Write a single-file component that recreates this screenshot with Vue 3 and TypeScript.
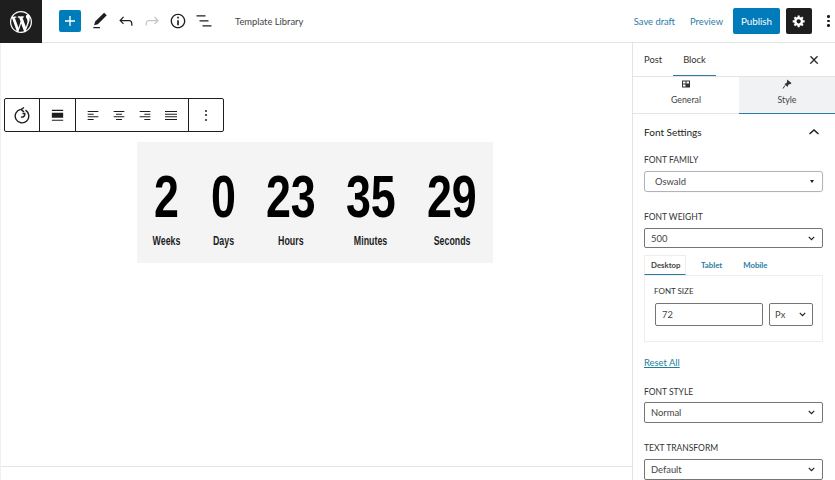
<script setup lang="ts">
const counters = [
  { value: '2', label: 'Weeks', width: 29 },
  { value: '0', label: 'Days', width: 25 },
  { value: '23', label: 'Hours', width: 50 },
  { value: '35', label: 'Minutes', width: 50 },
  { value: '29', label: 'Seconds', width: 52 },
];

const headerIcons = [
  { name: 'edit', d: 'M20.1 5.1L16.9 2 6.2 12.7l-1.3 4.4 4.5-1.3L20.1 5.1zM4 20.8h8v-1.5H4v1.5z' },
  { name: 'undo', d: 'M18.3 11.7c-.6-.6-1.4-.9-2.3-.9H6.7l2.9-3.3-1.1-1-4.5 5L8.5 16l1-1-2.7-2.7H16c.5 0 .9.2 1.3.5 1 1 1 3.4 1 4.5v.3h1.5v-.2c0-1.5 0-4.3-1.5-5.7z' },
  { name: 'redo', d: 'M15.6 6.5l-1.1 1 2.9 3.3H8c-.9 0-1.7.3-2.3.9-1.4 1.5-1.4 4.2-1.4 5.6v.2h1.5v-.3c0-1.1 0-3.5 1-4.5.3-.3.7-.5 1.3-.5h9.2L14.5 15l1.1 1.1 4.6-4.6-4.6-5z' },
  { name: 'info', d: 'M12 3.2c-4.8 0-8.8 3.9-8.8 8.8 0 4.8 3.9 8.8 8.8 8.8 4.8 0 8.8-3.9 8.8-8.8 0-4.8-4-8.8-8.8-8.8zm0 16c-4 0-7.2-3.3-7.2-7.2C4.8 8 8 4.8 12 4.8s7.2 3.3 7.2 7.2c0 4-3.2 7.2-7.2 7.2zM11 17h2v-6h-2v6zm0-8h2V7h-2v2z' },
  { name: 'list', d: 'M13.8 5.2H3v1.5h10.8V5.2zm-3.6 12v1.5H21v-1.5H10.2zm7.2-6H6.6v1.5h10.8v-1.5z' },
];

const alignIcons = [
  'M4 6h16v1.500H4zM4 10h9v1.500H4zM4 14h16v1.500H4zM4 18h9v1.500H4z',
  'M4 6h16v1.500H4zM7.500 10h9v1.500h-9zM4 14h16v1.500H4zM7.500 18h9v1.500h-9z',
  'M4 6h16v1.500H4zM11 10h9v1.500h-9zM4 14h16v1.500H4zM11 18h9v1.500h-9z',
  'M3 6h18v1.500H3zM3 10h18v1.500H3zM3 14h18v1.500H3zM3 18h18v1.500H3z',
];
</script>

<template>
  <div class="editor">
    <header class="topbar">
      <div class="logo">
        <svg viewBox="0 0 20 20" fill="#fff">
          <path d="M20 10c0-5.51-4.49-10-10-10C4.48 0 0 4.49 0 10c0 5.52 4.48 10 10 10 5.51 0 10-4.48 10-10zM7.78 15.37L4.37 6.22c.55-.02 1.17-.08 1.17-.08.5-.06.44-1.13-.06-1.11 0 0-1.45.11-2.37.11-.18 0-.37 0-.58-.01C4.12 2.69 6.87 1.11 10 1.11c2.33 0 4.45.87 6.05 2.34-.68-.11-1.65.39-1.65 1.58 0 .74.45 1.36.9 2.1.35.61.55 1.36.55 2.46 0 1.49-1.4 5-1.4 5l-3.03-8.37c.54-.02.82-.17.82-.17.5-.05.44-1.25-.06-1.22 0 0-1.44.12-2.38.12-.87 0-2.33-.12-2.33-.12-.5-.03-.56 1.2-.06 1.22l.92.08 1.26 3.41zM17.41 10c.24-.64.74-1.87.43-4.25.7 1.29 1.05 2.71 1.05 4.25 0 3.29-1.73 6.24-4.4 7.78.97-2.59 1.94-5.2 2.92-7.78zM6.1 18.09C3.12 16.65 1.11 13.53 1.11 10c0-1.3.23-2.48.72-3.59C3.25 10.3 4.67 14.2 6.1 18.09zm4.03-6.63l2.58 6.98c-.86.29-1.76.45-2.71.45-.79 0-1.57-.11-2.29-.33.81-2.38 1.62-4.74 2.42-7.1z" />
        </svg>
      </div>
      <button class="add">
        <svg width="20" height="20" viewBox="0 0 24 24" fill="#fff"><path d="M18 11.2h-5.2V6h-1.6v5.2H6v1.6h5.2V18h1.6v-5.2H18z" /></svg>
      </button>
      <div class="tools">
        <span v-for="i in headerIcons" :key="i.name" class="tool" :class="{ off: i.name === 'redo' }">
          <svg width="20" height="20" viewBox="0 0 24 24" fill="currentColor"><path :d="i.d" /></svg>
        </span>
      </div>
      <span class="doc-title">Template Library</span>
      <div class="actions">
        <a class="link save">Save draft</a>
        <a class="link">Preview</a>
        <button class="publish">Publish</button>
        <button class="settings">
          <svg width="14" height="14" viewBox="0 0 20 20" fill="#fff"><path d="M18 12h-2.18c-.17.7-.44 1.35-.81 1.93l1.54 1.54-2.1 2.1-1.54-1.54c-.58.36-1.23.63-1.91.79V19H8v-2.18c-.68-.16-1.33-.43-1.91-.79l-1.54 1.54-2.12-2.12 1.54-1.54c-.36-.58-.63-1.23-.79-1.91H1V9.03h2.17c.16-.7.44-1.35.8-1.94L2.43 5.55l2.1-2.1 1.54 1.54c.58-.37 1.24-.64 1.93-.81V2h3v2.18c.68.16 1.33.43 1.91.79l1.54-1.54 2.12 2.12-1.54 1.54c.36.59.64 1.24.8 1.94H18V12zm-8.5 1.5c1.66 0 3-1.34 3-3s-1.34-3-3-3-3 1.34-3 3 1.34 3 3 3z" /></svg>
        </button>
        <span class="dots"><i></i><i></i><i></i></span>
      </div>
    </header>

    <div class="body">
      <main class="canvas">
        <div class="content">
          <div class="block-toolbar">
            <div class="group g-rotate">
              <svg width="18" height="18" viewBox="0 0 18 18" fill="none" stroke="#1e1e1e" stroke-width="1.400">
                <path d="M7.500 3.400A6.800 6.800 0 1 0 12.500 4.200" />
                <path d="M11 1.500 8 3.600l3 2.300" />
                <path d="M9.500 7.500h2.300c.4 2.500-1.500 4-3.800 3.500" />
              </svg>
            </div>
            <div class="group g-width">
              <svg width="17" height="17" viewBox="0 0 24 24" fill="#1e1e1e"><path d="M4 4h16v1.500H4zM4 8h16v7H4zM4 18h16v1.500H4z" /></svg>
            </div>
            <div class="group g-align">
              <svg v-for="(d, n) in alignIcons" :key="n" width="16" height="16" viewBox="0 0 24 24" fill="#1e1e1e"><path :d="d" /></svg>
            </div>
            <div class="group g-more"><span class="dots small"><i></i><i></i><i></i></span></div>
          </div>

          <section class="countdown">
            <div v-for="c in counters" :key="c.label" class="counter" :style="{ width: c.width + 'px' }">
              <span class="num"><span class="num-inner">{{ c.value }}</span></span>
              <span class="label"><span class="label-inner">{{ c.label }}</span></span>
            </div>
          </section>
        </div>
        <div class="statusbar"></div>
      </main>

      <aside class="sidebar">
        <div class="side-tabs">
          <span class="side-tab">Post</span>
          <span class="side-tab active">Block</span>
          <svg class="close" width="12" height="12" viewBox="0 0 24 24" fill="#1e1e1e"><path d="M13 11.800l6.100-6.300-1-1-6.100 6.200-6.100-6.200-1 1 6.100 6.300-6.500 6.700 1 1 6.500-6.600 6.500 6.600 1-1z" stroke="#1e1e1e" stroke-width="1.500" /></svg>
        </div>

        <div class="mode-tabs">
          <div class="mode general">
            <svg width="10" height="10" viewBox="0 0 10 10" fill="#333"><path d="M1 1.500h8v7H1zM2 2.500v2h2.500v-2zM5.500 2.500v2H8v-2zM2 5.500v2h2.500v-2z" fill-rule="evenodd" /></svg>
            <span>General</span>
          </div>
          <div class="mode style">
            <svg width="10" height="10" viewBox="0 0 10 10" fill="#333"><path d="M5 .5 9.500 4 8 5.500 7 5 6 6.500 5.500 8 2.500 5l2-1L5 3z" /><path d="M3 6.500 1 9.500" stroke="#333" /></svg>
            <span>Style</span>
          </div>
        </div>

        <div class="panel">
          <div class="panel-head">
            <span>Font Settings</span>
            <svg width="12" height="8" viewBox="0 0 12 8" fill="none" stroke="#1e1e1e" stroke-width="1.500"><path d="M1.500 6 6 2l4.500 4" /></svg>
          </div>

          <label class="field-label first">FONT FAMILY</label>
          <div class="select soft">
            <span class="pad">Oswald</span>
            <span class="caret"></span>
          </div>

          <label class="field-label weight">FONT WEIGHT</label>
          <div class="select slim">
            <span>500</span>
            <svg width="7" height="5" viewBox="0 0 9 6" fill="none" stroke="#1e1e1e" stroke-width="1.500"><path d="M1 1l3.500 3.500L8 1" /></svg>
          </div>

          <div class="device-tabs">
            <span class="device active">Desktop</span>
            <span class="device tablet">Tablet</span>
            <span class="device">Mobile</span>
          </div>
          <div class="size-box">
            <label class="field-label flat">FONT SIZE</label>
            <div class="size-row">
              <div class="input">72</div>
              <div class="unit">
                <span>Px</span>
                <svg width="7" height="5" viewBox="0 0 9 6" fill="none" stroke="#1e1e1e" stroke-width="1.500"><path d="M1 1l3.500 3.500L8 1" /></svg>
              </div>
            </div>
          </div>

          <a class="reset">Reset All</a>

          <label class="field-label">FONT STYLE</label>
          <div class="select">
            <span>Normal</span>
            <svg width="7" height="5" viewBox="0 0 9 6" fill="none" stroke="#1e1e1e" stroke-width="1.500"><path d="M1 1l3.500 3.500L8 1" /></svg>
          </div>

          <label class="field-label tall">TEXT TRANSFORM</label>
          <div class="select">
            <span>Default</span>
            <svg width="7" height="5" viewBox="0 0 9 6" fill="none" stroke="#1e1e1e" stroke-width="1.500"><path d="M1 1l3.500 3.500L8 1" /></svg>
          </div>
        </div>
      </aside>
    </div>
  </div>
</template>

<style>
html, body { margin: 0; background: #fff; }
</style>

<style scoped>
.editor {
  width: 835px;
  height: 480px;
  overflow: hidden;
  display: flex;
  flex-direction: column;
  font-family: Lato, "Open Sans", sans-serif;
  font-size: 9.400px;
  color: #1e1e1e;
  background: #fff;
}

button { border: 0; padding: 0; font: inherit; display: flex; align-items: center; justify-content: center; }

.topbar {
  height: 43px;
  flex: none;
  display: flex;
  align-items: center;
  box-sizing: border-box;
  border-bottom: 1px solid #e4e4e4;
}
.logo {
  width: 42px;
  height: 43px;
  background: #1e1e1e;
  display: flex;
  align-items: center;
  justify-content: center;
  align-self: flex-start;
}
.logo svg { width: 22px; height: 22px; }
.add {
  width: 22px;
  height: 22px;
  margin-left: 17px;
  background: #007cba;
  border-radius: 2px;
}
.tools { display: flex; margin-left: 9px; gap: 6px; }
.tool { width: 20px; height: 20px; display: block; color: #1e1e1e; }
.tool.off { color: #c4c4c4; }
.doc-title { margin-left: 21px; color: #444; }
.actions { margin-left: auto; display: flex; align-items: center; }
.link { color: #2a7ba5; margin-right: 10px; }
.link.save { margin-right: 15px; }
.publish {
  width: 47px;
  height: 26px;
  background: #007cba;
  color: #fff;
  font-size: 9.800px;
  border-radius: 2px;
}
.settings {
  width: 26px;
  height: 26px;
  margin-left: 6px;
  background: #1e1e1e;
  border-radius: 2px;
}
.dots {
  display: flex;
  flex-direction: column;
  gap: 2px;
  width: 3px;
  margin: 0 5px 0 15px;
}
.dots i { width: 2.500px; height: 2.500px; border-radius: 50%; background: #1e1e1e; display: block; }
.dots.small { margin: 0; gap: 2.500px; }
.dots.small i { width: 2px; height: 2px; }

.body { flex: 1; display: flex; min-height: 0; }

.canvas {
  flex: 1;
  display: flex;
  flex-direction: column;
  box-sizing: border-box;
  border-left: 1px solid #f0f0f0;
}
.content { flex: 1; padding-top: 55px; }
.statusbar { height: 13px; flex: none; border-top: 1px solid #e4e4e4; }

.block-toolbar {
  display: flex;
  width: 220px;
  height: 34px;
  margin-left: 3px;
  box-sizing: border-box;
  border: 1px solid #1e1e1e;
  border-radius: 2px;
  background: #fff;
}
.group {
  display: flex;
  align-items: center;
  justify-content: center;
  border-right: 1px solid #1e1e1e;
}
.group:last-child { border-right: 0; }
.g-rotate { width: 34px; }
.g-width { width: 35px; }
.g-align { width: 112px; gap: 10px; }
.g-more { flex: 1; }

.countdown {
  display: flex;
  justify-content: center;
  gap: 30px;
  width: 356px;
  height: 121px;
  margin: 10px 0 0 136px;
  box-sizing: border-box;
  padding-top: 25px;
  background: #f4f4f4;
}
.counter { display: flex; flex-direction: column; align-items: center; }
.num {
  display: flex;
  justify-content: center;
  width: 100%;
  height: 60px;
  font: 700 59px/60px "Liberation Sans", sans-serif;
  color: #000;
}
.num-inner { display: block; flex: none; transform: scaleX(0.76); }
.label {
  display: flex;
  justify-content: center;
  width: 100%;
  margin-top: 6px;
  font: 700 13px/16px "Liberation Sans", sans-serif;
  color: #1e1e1e;
  white-space: nowrap;
}
.label-inner { display: block; flex: none; transform: scaleX(0.68); }

.sidebar {
  width: 203px;
  flex: none;
  box-sizing: border-box;
  border-left: 1px solid #e4e4e4;
  display: flex;
  flex-direction: column;
  overflow: hidden;
}
.side-tabs {
  height: 34px;
  flex: none;
  display: flex;
  align-items: center;
  padding-left: 11px;
  gap: 21px;
  box-sizing: border-box;
  border-bottom: 1px solid #e4e4e4;
}
.side-tab { line-height: 33px; height: 33px; color: #333; }
.side-tab.active { box-shadow: inset 0 -1px 0 #2a7ba5; padding: 0 10px; margin-left: -10px; margin-right: -10px; }
.close { margin-left: auto; margin-right: 15px; }

.mode-tabs { height: 37px; flex: none; display: flex; box-sizing: border-box; border-bottom: 1px solid #e4e4e4; }
.mode {
  display: flex;
  flex-direction: column;
  align-items: center;
  gap: 5px;
  padding-top: 2px;
  font-size: 8.800px;
  color: #444;
  box-sizing: border-box;
}
.mode.general { width: 106px; }
.mode.style { flex: 1; background: #f1f2f3; border-bottom: 1px solid #2a7ba5; margin-bottom: -1px; }

.panel { padding: 0 12px 0 11px; display: flex; flex-direction: column; }
.panel-head {
  height: 36px;
  flex: none;
  display: flex;
  align-items: center;
  justify-content: space-between;
  font-size: 10px;
  color: #222;
  padding-right: 3px;
}
.field-label {
  display: block;
  font-size: 8.500px;
  line-height: 12px;
  color: #333;
  margin: 17px 0 4px;
}
.field-label.first { margin: 4px 0 5px; }
.field-label.weight { margin: 19px 0 5px; }
.field-label.tall { margin: 19px 0 5px; }
.field-label.flat { margin: 0 0 6px; font-size: 8px; }
.select {
  height: 21px;
  flex: none;
  box-sizing: border-box;
  border: 1px solid #757575;
  border-radius: 2px;
  display: flex;
  align-items: center;
  justify-content: space-between;
  padding: 0 7px 0 6px;
  color: #444;
}
.select.slim { height: 20px; }
.select.soft { border-color: #b0b4b8; border-radius: 3px; box-shadow: 0 0 1px rgba(0,0,0,.2); }
.pad { padding-left: 4px; }
.caret { width: 0; height: 0; border: 2px solid transparent; border-top: 3px solid #1e1e1e; border-bottom: 0; margin-right: 1px; }

.device-tabs { display: flex; align-items: flex-end; height: 27px; flex: none; font-size: 7.800px; font-weight: 700; color: #2a7ba5; }
.device { height: 20px; line-height: 20px; }
.device.tablet { margin-right: 21px; }
.device.active {
  color: #444;
  padding: 0 6px;
  box-sizing: border-box;
  width: 42px;
  margin-right: 15px;
  border: 1px solid #eee;
  border-bottom: 1px solid #2a7ba5;
  line-height: 18px;
}
.size-box {
  height: 67px;
  flex: none;
  box-sizing: border-box;
  border: 1px solid #eee;
  padding: 9px 9px 0;
}
.size-row { display: flex; gap: 6px; }
.input {
  width: 108px;
  height: 23px;
  box-sizing: border-box;
  border: 1px solid #757575;
  border-radius: 2px;
  line-height: 21px;
  padding-left: 6px;
  color: #444;
  margin-left: 1px;
}
.unit {
  width: 44px;
  height: 23px;
  box-sizing: border-box;
  border: 1px solid #757575;
  border-radius: 2px;
  display: flex;
  align-items: center;
  justify-content: space-between;
  padding: 0 6px 0 5px;
  color: #444;
}
.reset {
  margin-top: 14px;
  line-height: 13px;
  color: #1b7f9c;
  text-decoration: underline;
}
</style>
